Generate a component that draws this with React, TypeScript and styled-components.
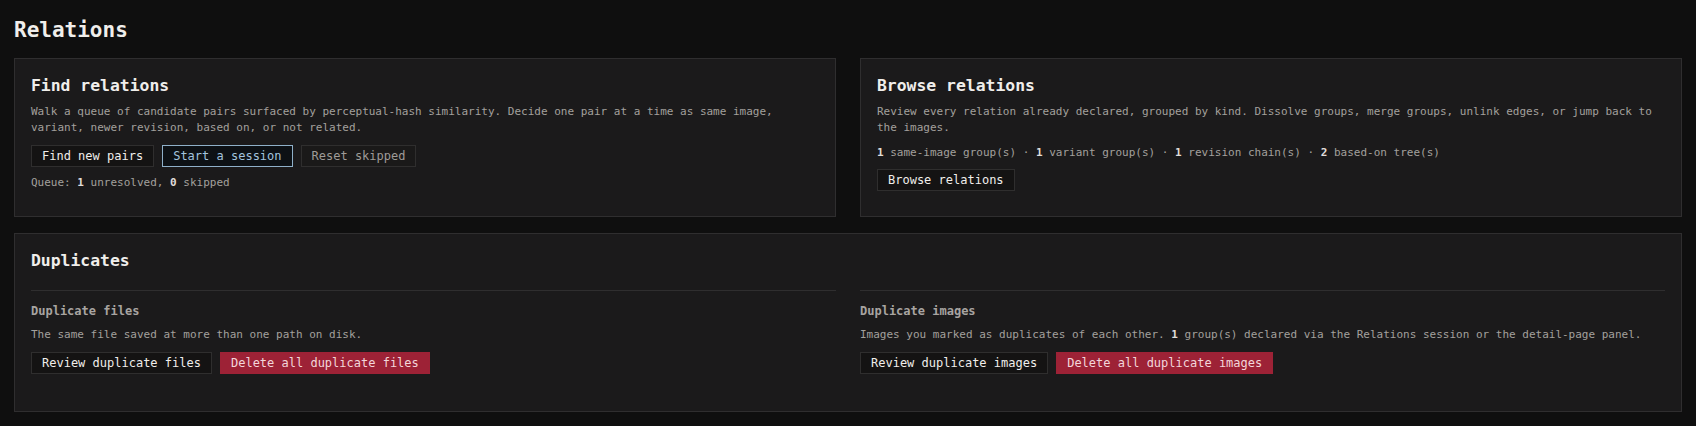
import React from 'react';
import styled, { createGlobalStyle } from 'styled-components';

const GlobalStyle = createGlobalStyle`
  html, body {
    margin: 0;
    padding: 0;
    background: #0f0f0f;
    color: #e8e6e3;
    font-family: "DejaVu Sans Mono", "Liberation Mono", monospace;
  }
`;

const Page = styled.div`
  padding: 16px 14px 15px;
`;

const Title = styled.h1`
  margin: 0 0 14px;
  font-size: 21px;
  line-height: 28px;
  font-weight: 700;
  color: #f0eeeb;
`;

const TopGrid = styled.div`
  display: grid;
  grid-template-columns: 1fr 1fr;
  gap: 24px;
  margin-bottom: 16px;
`;

const Card = styled.section`
  background: #1b1a1b;
  border: 1px solid #2f2e2f;
  padding: 16px 16px 17px;
`;

const CardTitle = styled.h2`
  margin: 0 0 7px;
  font-size: 16.4px;
  line-height: 22px;
  font-weight: 700;
  color: #f0eeeb;
`;

const Text = styled.p<{ $gap?: number }>`
  margin: 0 0 ${({ $gap }) => $gap ?? 8}px;
  font-size: 11px;
  line-height: 16px;
  color: #a3a09d;

  b {
    color: #e0ddda;
    font-weight: 700;
  }
`;

const Actions = styled.div`
  display: flex;
  gap: 8px;
  margin-bottom: 8px;
`;

type Variant = 'default' | 'primary' | 'muted' | 'danger';

const Button = styled.button<{ $variant?: Variant }>`
  font-family: inherit;
  font-size: 12px;
  line-height: 14px;
  padding: 3px 10px;
  border: 1px solid
    ${({ $variant }) =>
      $variant === 'primary' ? '#8fb0c9' : $variant === 'danger' ? '#9d2236' : '#2f2e2e'};
  background: ${({ $variant }) =>
    $variant === 'primary' ? '#0d1115' : $variant === 'danger' ? '#9d2236' : $variant === 'muted' ? '#1a1919' : '#141313'};
  color: ${({ $variant }) =>
    $variant === 'primary'
      ? '#a3c3de'
      : $variant === 'danger'
        ? '#f3d6da'
        : $variant === 'muted'
          ? '#9f9b98'
          : '#f0eeeb'};
  cursor: pointer;
`;

const DupGrid = styled.div`
  display: grid;
  grid-template-columns: 1fr 1fr;
  gap: 24px;
  margin-top: 18px;
`;

const DupColumn = styled.div`
  border-top: 1px solid #2f2e2f;
  padding-top: 11px;
  padding-bottom: 12px;
`;

const SubTitle = styled.h3`
  margin: 0 0 7px;
  font-size: 12px;
  line-height: 18px;
  font-weight: 700;
  color: #a8a4a1;
`;

export default function App() {
  return (
    <>
      <GlobalStyle />
      <Page>
        <Title>Relations</Title>
        <TopGrid>
          <Card>
            <CardTitle>Find relations</CardTitle>
            <Text $gap={9}>
              Walk a queue of candidate pairs surfaced by perceptual-hash similarity. Decide one pair at a time as same image,
              variant, newer revision, based on, or not related.
            </Text>
            <Actions>
              <Button>Find new pairs</Button>
              <Button $variant="primary">Start a session</Button>
              <Button $variant="muted">Reset skipped</Button>
            </Actions>
            <Text>
              Queue: <b>1</b> unresolved, <b>0</b> skipped
            </Text>
          </Card>
          <Card>
            <CardTitle>Browse relations</CardTitle>
            <Text $gap={9}>
              Review every relation already declared, grouped by kind. Dissolve groups, merge groups, unlink edges, or jump back to
              the images.
            </Text>
            <Text $gap={8}>
              <b>1</b> same-image group(s) · <b>1</b> variant group(s) · <b>1</b> revision chain(s) · <b>2</b> based-on tree(s)
            </Text>
            <Actions>
              <Button>Browse relations</Button>
            </Actions>
          </Card>
        </TopGrid>
        <Card>
          <CardTitle>Duplicates</CardTitle>
          <DupGrid>
            <DupColumn>
              <SubTitle>Duplicate files</SubTitle>
              <Text $gap={9}>The same file saved at more than one path on disk.</Text>
              <Actions>
                <Button>Review duplicate files</Button>
                <Button $variant="danger">Delete all duplicate files</Button>
              </Actions>
            </DupColumn>
            <DupColumn>
              <SubTitle>Duplicate images</SubTitle>
              <Text $gap={9}>
                Images you marked as duplicates of each other. <b>1</b> group(s) declared via the Relations session or the
                detail-page panel.
              </Text>
              <Actions>
                <Button>Review duplicate images</Button>
                <Button $variant="danger">Delete all duplicate images</Button>
              </Actions>
            </DupColumn>
          </DupGrid>
        </Card>
      </Page>
    </>
  );
}
